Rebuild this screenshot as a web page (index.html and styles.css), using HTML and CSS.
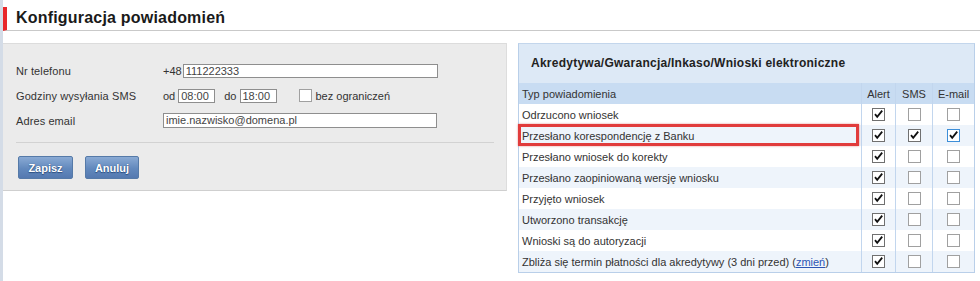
FILE: index.html
```html
<!DOCTYPE html>
<html lang="pl">
<head>
<meta charset="utf-8">
<title>Konfiguracja powiadomień</title>
<link rel="stylesheet" href="styles.css">
</head>
<body>
<div class="page">
  <h1 class="title">Konfiguracja powiadomień</h1>
  <div class="content">
    <div class="form-panel">
      <div class="form-grid">
        <div class="label">Nr telefonu</div>
        <div class="field"><span class="prefix">+48</span><span class="input phone">111222333</span></div>
        <div class="label">Godziny wysyłania SMS</div>
        <div class="field">
          <span class="word">od</span><span class="input time">08:00</span>
          <span class="word do">do</span><span class="input time">18:00</span>
          <span class="cb cb-form"></span><span class="word">bez ograniczeń</span>
        </div>
        <div class="label">Adres email</div>
        <div class="field"><span class="input email">imie.nazwisko@domena.pl</span></div>
      </div>
      <div class="sep"></div>
      <div class="buttons">
        <span class="btn btn-save">Zapisz</span>
        <span class="btn btn-cancel">Anuluj</span>
      </div>
    </div>

    <div class="table-panel">
      <div class="table-title">Akredytywa/Gwarancja/Inkaso/Wnioski elektroniczne</div>
      <table class="grid">
        <thead>
          <tr><th class="c-name">Typ powiadomienia</th><th class="c-alert">Alert</th><th class="c-sms">SMS</th><th class="c-mail">E-mail</th></tr>
        </thead>
        <tbody>
          <tr><td class="c-name">Odrzucono wniosek</td><td><span class="cb on"></span></td><td><span class="cb"></span></td><td><span class="cb"></span></td></tr>
          <tr><td class="c-name hl-cell">Przesłano korespondencję z Banku<span class="hl"></span></td><td><span class="cb on"></span></td><td><span class="cb on"></span></td><td><span class="cb on focus"></span></td></tr>
          <tr><td class="c-name">Przesłano wniosek do korekty</td><td><span class="cb on"></span></td><td><span class="cb"></span></td><td><span class="cb"></span></td></tr>
          <tr><td class="c-name">Przesłano zaopiniowaną wersję wniosku</td><td><span class="cb on"></span></td><td><span class="cb"></span></td><td><span class="cb"></span></td></tr>
          <tr><td class="c-name">Przyjęto wniosek</td><td><span class="cb on"></span></td><td><span class="cb"></span></td><td><span class="cb"></span></td></tr>
          <tr><td class="c-name">Utworzono transakcję</td><td><span class="cb on"></span></td><td><span class="cb"></span></td><td><span class="cb"></span></td></tr>
          <tr><td class="c-name">Wnioski są do autoryzacji</td><td><span class="cb on"></span></td><td><span class="cb"></span></td><td><span class="cb"></span></td></tr>
          <tr><td class="c-name">Zbliża się termin płatności dla akredytywy (3 dni przed) (<a class="link" href="#">zmień</a>)</td><td><span class="cb on"></span></td><td><span class="cb"></span></td><td><span class="cb"></span></td></tr>
        </tbody>
      </table>
    </div>
  </div>
</div>
</body>
</html>
```

FILE: styles.css
```css
html, body {
  margin: 0;
  padding: 0;
  background: #ffffff;
}
body {
  font-family: "Liberation Sans", Arial, sans-serif;
  font-size: 11px;
  color: #333333;
}
.page {
  min-height: 281px;
  box-sizing: border-box;
  border-left: 3px solid #d4dce7;
  padding-top: 7px;
}
.title {
  margin: 0;
  height: 23px;
  border-left: 4px solid #e8272a;
  border-bottom: 1px solid #c9c9c9;
  padding-left: 9px;
  font-size: 16px;
  letter-spacing: 0.2px;
  font-weight: bold;
  line-height: 22px;
  color: #1a1a1a;
}
.content {
  display: flex;
  align-items: flex-start;
  margin-top: 12px;
}
.form-panel {
  width: 503px;
  background: #ebebeb;
  border-top: 1px solid #dcdcdc;
  border-right: 1px solid #dddddd;
  border-bottom: 1px solid #cfcfcf;
  padding: 14px 0 11px 0;
}
.form-grid {
  display: grid;
  grid-template-columns: 147px 1fr;
  grid-auto-rows: 25px;
  padding-left: 13px;
  align-items: center;
}
.label {
  letter-spacing: 0.1px;
}
.field {
  display: flex;
  align-items: center;
}
.prefix {
  margin-right: 1px;
}
.input {
  display: inline-block;
  box-sizing: border-box;
  height: 14px;
  line-height: 12px;
  background: #ffffff;
  border: 1px solid #8e8e8e;
  padding-left: 2px;
  color: #444;
  font-size: 11px;
}
.phone { width: 255px; }
.time { width: 37px; }
.email { width: 274px; height: 15px; line-height: 13px; }
.word { margin-right: 3px; }
.do { margin-left: 9px; }
.cb-form { margin-left: 22px; margin-right: 4px; }
.sep {
  margin: 9px 12px 0 13px;
  height: 1px;
  background: #d2d2d2;
}
.buttons {
  display: flex;
  gap: 12px;
  margin: 13px 0 0 15px;
}
.btn {
  display: inline-flex;
  align-items: center;
  justify-content: center;
  box-sizing: border-box;
  height: 23px;
  border: 1px solid #557aa8;
  border-radius: 2px;
  background: linear-gradient(#8aaad4, #6289bd 55%, #5479b0);
  color: #ffffff;
  font-weight: bold;
  font-size: 11px;
  text-shadow: 0 0 1px #2d4f80, 0 1px 1px #2d4f80;
}
.btn-save { width: 55px; }
.btn-cancel { width: 54px; }

.table-panel {
  margin-left: 11px;
  width: 455px;
  border: 1px solid #b9cfe9;
  border-top-color: #c3d6ec;
}
.table-title {
  height: 39px;
  line-height: 39px;
  background: #dde9f6;
  padding-left: 12px;
  font-weight: bold;
  font-size: 12px;
  letter-spacing: 0.25px;
  color: #222;
}
.grid {
  width: 100%;
  border-collapse: collapse;
  table-layout: fixed;
}
.grid th, .grid td {
  height: 21px;
  padding: 0;
  font-weight: normal;
  text-align: center;
  border-left: 1px solid #c2d6ee;
}
.grid .c-name {
  text-align: left;
  padding-left: 3px;
  border-left: none;
}
.grid th {
  background: #c8dcf2;
  color: #333;
}
.grid th.c-alert { width: 33px; }
.grid th.c-sms { width: 36px; }
.grid th.c-mail { width: 41px; }
.grid tbody tr:nth-child(even) td {
  background: #eef4fb;
}
.grid td {
  color: #333;
}
.cb {
  display: inline-block;
  box-sizing: border-box;
  width: 13px;
  height: 13px;
  border: 1px solid #a0a0a0;
  background: #ffffff;
  vertical-align: middle;
  position: relative;
}
.cb.on {
  border-color: #707070;
  background-image: url("data:image/svg+xml;utf8,<svg xmlns='http://www.w3.org/2000/svg' width='11' height='11' viewBox='0 0 11 11'><path d='M2 5.2 L4.2 7.8 L9.2 1.6' fill='none' stroke='%23111' stroke-width='1.8'/></svg>");
  background-repeat: no-repeat;
  background-position: center;
}
.cb.focus {
  border-color: #3c8ed8;
}
.hl-cell {
  position: relative;
}
.hl {
  position: absolute;
  left: -1px;
  top: -1px;
  right: 2px;
  bottom: 0;
  border: 3px solid #e13c3c;
  box-shadow: 0 0 2px rgba(200, 40, 40, 0.5);
  pointer-events: none;
}
.link {
  color: #2c54b4;
  text-decoration: underline;
}
```
